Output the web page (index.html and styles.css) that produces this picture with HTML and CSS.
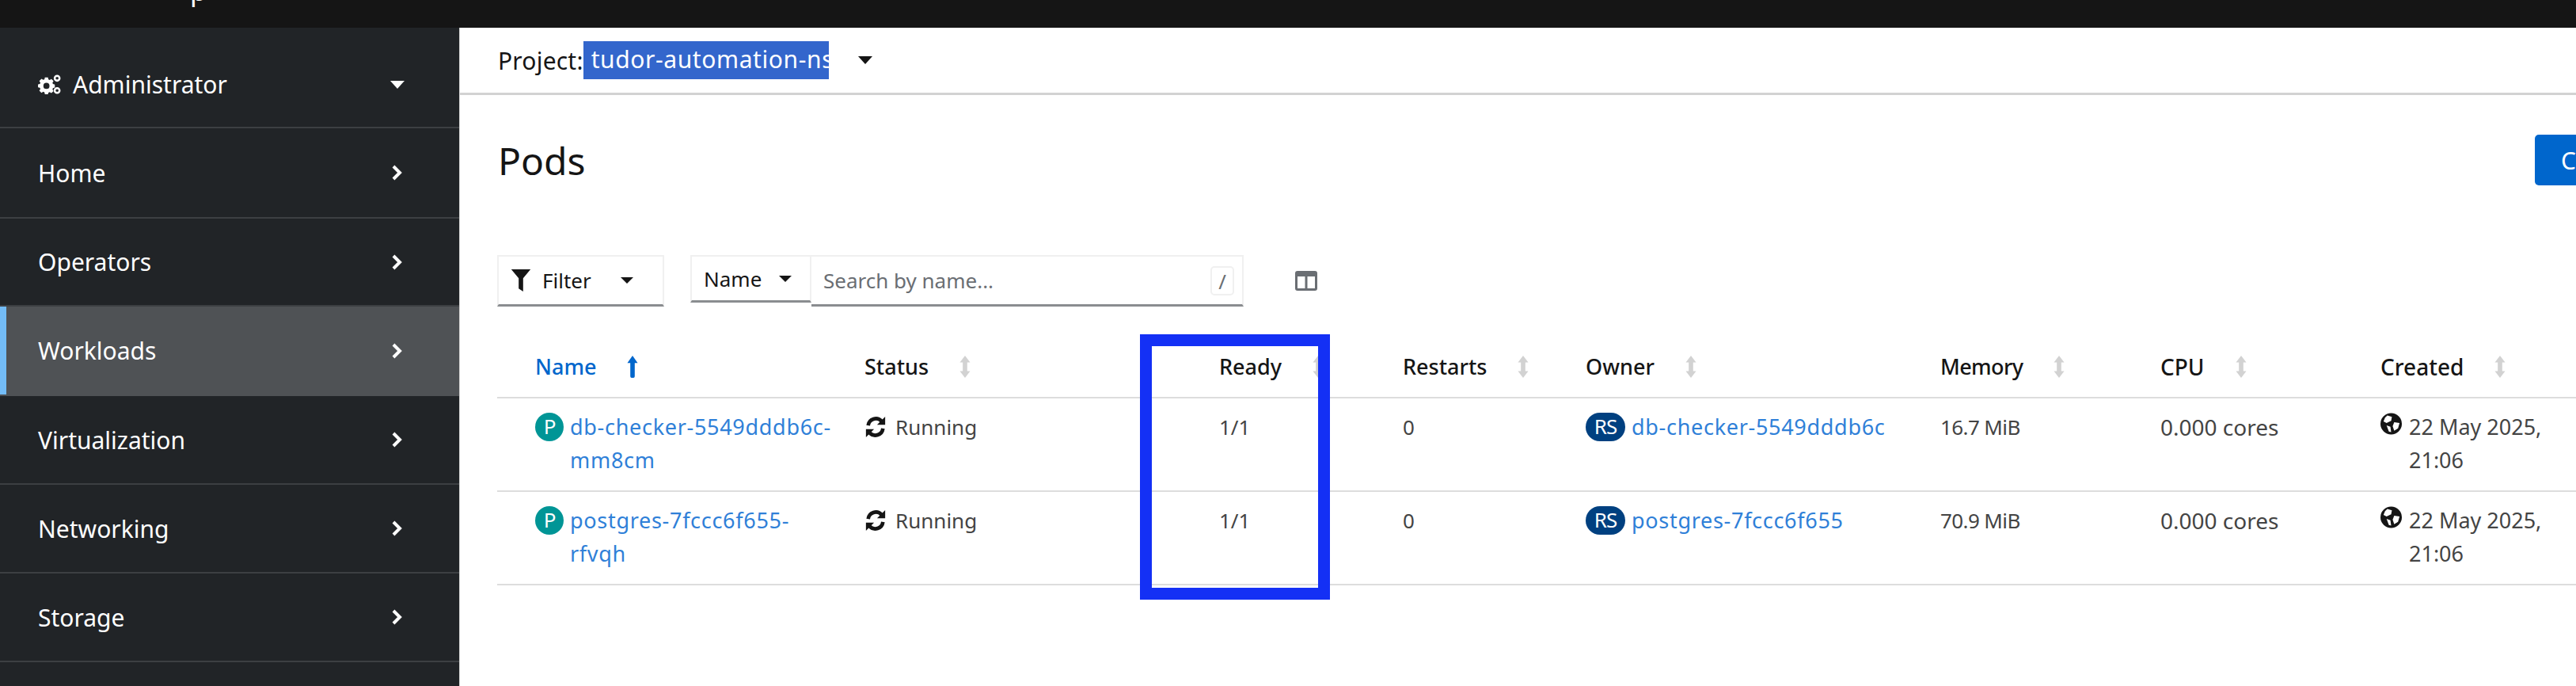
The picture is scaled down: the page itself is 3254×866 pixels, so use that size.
FILE: index.html

```html
<!DOCTYPE html>
<html lang="en">
<head>
  <meta charset="UTF-8">
  <title>Pods</title>
  <link rel="stylesheet" href="styles.css">
</head>
<body>

<header class="masthead"><span class="brand-tail">p</span></header>

<div class="page">
  <nav class="sidebar">
    <div class="nav-item perspective">
      <span class="nav-label">
        <svg class="gears" viewBox="0 0 30 28"><path fill="currentColor" fill-rule="evenodd" d="M9 5h4l.6 2.6 1.6.7 2.3-1.4 2.8 2.8-1.4 2.3.7 1.6 2.4.6v4l-2.4.6-.7 1.6 1.4 2.3-2.8 2.8-2.3-1.4-1.6.7L13 27H9l-.6-2.6-1.6-.7-2.3 1.4-2.8-2.8 1.4-2.3-.7-1.6L0 18v-4l2.4-.6.7-1.6-1.4-2.3 2.8-2.8 2.3 1.4 1.6-.7zm2 7a4 4 0 1 0 0 8 4 4 0 0 0 0-8z"/><circle cx="25" cy="6" r="3.2" fill="none" stroke="currentColor" stroke-width="2.6"/><circle cx="25" cy="22" r="3.2" fill="none" stroke="currentColor" stroke-width="2.6"/></svg>
        Administrator
      </span>
      <span class="caret"></span>
    </div>
    <div class="nav-item"><span class="nav-label">Home</span><svg class="chevron" viewBox="0 0 14 22"><path d="M3 3l8 8-8 8" fill="none" stroke="currentColor" stroke-width="4"/></svg></div>
    <div class="nav-item"><span class="nav-label">Operators</span><svg class="chevron" viewBox="0 0 14 22"><path d="M3 3l8 8-8 8" fill="none" stroke="currentColor" stroke-width="4"/></svg></div>
    <div class="nav-item active"><span class="nav-label">Workloads</span><svg class="chevron" viewBox="0 0 14 22"><path d="M3 3l8 8-8 8" fill="none" stroke="currentColor" stroke-width="4"/></svg></div>
    <div class="nav-item"><span class="nav-label">Virtualization</span><svg class="chevron" viewBox="0 0 14 22"><path d="M3 3l8 8-8 8" fill="none" stroke="currentColor" stroke-width="4"/></svg></div>
    <div class="nav-item"><span class="nav-label">Networking</span><svg class="chevron" viewBox="0 0 14 22"><path d="M3 3l8 8-8 8" fill="none" stroke="currentColor" stroke-width="4"/></svg></div>
    <div class="nav-item"><span class="nav-label">Storage</span><svg class="chevron" viewBox="0 0 14 22"><path d="M3 3l8 8-8 8" fill="none" stroke="currentColor" stroke-width="4"/></svg></div>
  </nav>

  <main class="content">
    <div class="project-bar">
      <span class="project-label">Project:</span><span class="selected">tudor-automation-ns</span>
      <span class="caret dark"></span>
    </div>

    <div class="title-row">
      <h1>Pods</h1>
      <button class="create">Create Pod</button>
    </div>

    <div class="toolbar">
      <div class="select filter">
        <svg class="funnel" viewBox="0 0 28 32"><path fill="currentColor" d="M1 1h26L17 13v18l-6-4V13z"/></svg>
        <span>Filter</span><span class="caret dark small"></span>
      </div>
      <div class="search-group">
        <div class="select name"><span>Name</span><span class="caret dark small"></span></div>
        <div class="search"><span class="placeholder">Search by name...</span><span class="slash">/</span></div>
      </div>
      <svg class="columns" viewBox="0 0 28 25"><path fill="#6a6e73" fill-rule="evenodd" d="M3 0h22a3 3 0 0 1 3 3v19a3 3 0 0 1-3 3H3a3 3 0 0 1-3-3V3a3 3 0 0 1 3-3zm0 7v15h9.500V7zm12.500 0v15H25V7z"/></svg>
    </div>

    <div class="pods">
      <div class="row head">
        <div class="cell col-name sorted">Name <svg class="sort" viewBox="0 0 14 30"><path fill="currentColor" d="M7 0l7 10H10v18a3 2 0 0 1-6 0V10H0z"/></svg></div>
        <div class="cell col-status">Status <svg class="sort" viewBox="0 0 14 30"><path fill="currentColor" d="M7 0l7 9h-4v12h4l-7 9-7-9h4V9H0z"/></svg></div>
        <div class="cell col-ready">Ready <svg class="sort" viewBox="0 0 14 30"><path fill="currentColor" d="M7 0l7 9h-4v12h4l-7 9-7-9h4V9H0z"/></svg></div>
        <div class="cell col-restarts">Restarts <svg class="sort" viewBox="0 0 14 30"><path fill="currentColor" d="M7 0l7 9h-4v12h4l-7 9-7-9h4V9H0z"/></svg></div>
        <div class="cell col-owner">Owner <svg class="sort" viewBox="0 0 14 30"><path fill="currentColor" d="M7 0l7 9h-4v12h4l-7 9-7-9h4V9H0z"/></svg></div>
        <div class="cell col-memory">Memory <svg class="sort" viewBox="0 0 14 30"><path fill="currentColor" d="M7 0l7 9h-4v12h4l-7 9-7-9h4V9H0z"/></svg></div>
        <div class="cell col-cpu">CPU <svg class="sort" viewBox="0 0 14 30"><path fill="currentColor" d="M7 0l7 9h-4v12h4l-7 9-7-9h4V9H0z"/></svg></div>
        <div class="cell col-created">Created <svg class="sort" viewBox="0 0 14 30"><path fill="currentColor" d="M7 0l7 9h-4v12h4l-7 9-7-9h4V9H0z"/></svg></div>
      </div>

      <div class="row">
        <div class="cell col-name"><span class="badge pod">P</span><a>db-checker-5549dddb6c-mm8cm</a></div>
        <div class="cell col-status"><svg class="sync" viewBox="0 0 28 30"><path fill="none" stroke="currentColor" stroke-width="5" d="M4 13a10.500 10.500 0 0 1 18-6M24 17a10.500 10.500 0 0 1-18 6"/><path fill="currentColor" d="M27 1v11H16zM1 29V18h11z"/></svg><span>Running</span></div>
        <div class="cell col-ready">1/1</div>
        <div class="cell col-restarts">0</div>
        <div class="cell col-owner"><span class="badge rs">RS</span><a>db-checker-5549dddb6c</a></div>
        <div class="cell col-memory">16.7 MiB</div>
        <div class="cell col-cpu">0.000 cores</div>
        <div class="cell col-created"><svg class="globe" viewBox="0 0 28 28"><circle cx="14" cy="14" r="14" fill="#151515"/><path fill="#fff" d="M9 3l6 2-1 5-6 3-4-2 2-5zM18 12l7 1-2 7-5 3-2-6zM8 16l5 2 1 7-3-1z"/></svg><span class="stamp">22 May 2025, 21:06</span></div>
      </div>

      <div class="row">
        <div class="cell col-name"><span class="badge pod">P</span><a>postgres-7fccc6f655-rfvqh</a></div>
        <div class="cell col-status"><svg class="sync" viewBox="0 0 28 30"><path fill="none" stroke="currentColor" stroke-width="5" d="M4 13a10.500 10.500 0 0 1 18-6M24 17a10.500 10.500 0 0 1-18 6"/><path fill="currentColor" d="M27 1v11H16zM1 29V18h11z"/></svg><span>Running</span></div>
        <div class="cell col-ready">1/1</div>
        <div class="cell col-restarts">0</div>
        <div class="cell col-owner"><span class="badge rs">RS</span><a>postgres-7fccc6f655</a></div>
        <div class="cell col-memory">70.9 MiB</div>
        <div class="cell col-cpu">0.000 cores</div>
        <div class="cell col-created"><svg class="globe" viewBox="0 0 28 28"><circle cx="14" cy="14" r="14" fill="#151515"/><path fill="#fff" d="M9 3l6 2-1 5-6 3-4-2 2-5zM18 12l7 1-2 7-5 3-2-6zM8 16l5 2 1 7-3-1z"/></svg><span class="stamp">22 May 2025, 21:06</span></div>
      </div>
    </div>
  </main>
</div>

<div class="callout"></div>

</body>
</html>
```

FILE: styles.css

```css
html, body { margin: 0; height: 100%; overflow: hidden; }
body { font-family: "Noto Sans", Arial, sans-serif; font-size: 26px; color: #151515; background: #fff; display: flex; flex-direction: column; }
svg { flex: none; display: block; }

.masthead { height: 35px; flex: none; background: #151515; color: #fff; overflow: hidden; position: relative; }
.brand-tail { position: absolute; left: 240px; top: -32px; font-size: 34px; line-height: 40px; }

.page { flex: 1; display: flex; min-height: 0; }

.sidebar { width: 580px; flex: none; background: #212427; color: #fff; display: grid; grid-template-rows: 127px 114px 111px 113px 112px 112px 112px; align-content: start; }
.nav-item { border-bottom: 2px solid #3c3f42; display: flex; align-items: center; justify-content: space-between; padding: 0 72px 0 48px; font-size: 30px; }
.nav-item.perspective { padding-top: 18px; }
.nav-item.active { background: #4f5255; border-bottom-color: #4f5255; box-shadow: inset 8px 0 0 #73bcf7; }
.nav-label { display: flex; align-items: center; gap: 15px; }
.gears { width: 29px; height: 27px; }
.chevron { width: 14px; height: 22px; }
.caret { width: 0; height: 0; border-left: 9px solid transparent; border-right: 9px solid transparent; border-top: 10px solid #fff; }
.perspective .caret { margin-right: -3px; }
.caret.dark { border-top-color: #151515; }
.caret.small { border-left-width: 8px; border-right-width: 8px; border-top-width: 8px; }

.content { flex: 1; min-width: 0; border-left: 1px solid #d2d2d2; }

.project-bar { height: 82px; border-bottom: 3px solid #d2d2d2; display: flex; align-items: center; padding-left: 48px; font-size: 30px; }
.project-label { letter-spacing: .2px; }
.selected { background: #3366cc; color: #fff; padding: 0 0 0 10px; height: 48px; line-height: 46px; width: 300px; letter-spacing: .6px; white-space: nowrap; }
.project-bar .caret { margin-left: 37px; }

.title-row { height: 106px; padding: 29px 0 0 48px; display: flex; justify-content: space-between; align-items: center; overflow: hidden; }
h1 { margin: 0; font-size: 48px; font-weight: 400; }
.create { width: 200px; height: 64px; margin-right: -148px; background: #0066cc; color: #fff; border: 0; border-radius: 5px; font: inherit; font-size: 30px; text-align: left; padding: 0 0 0 33px; flex: none; }

.toolbar { margin-top: 67px; padding-left: 47px; display: flex; align-items: center; }
.select { height: 60px; border: 2px solid #f0f0f0; border-bottom: 3px solid #8a8d90; display: flex; align-items: center; color: #151515; }
.filter { width: 207px; gap: 13px; }
.funnel { width: 28px; height: 30px; margin-left: 14px; }
.filter .caret { margin-left: 24px; }
.search-group { display: flex; margin-left: 33px; }
.name { width: 153px; gap: 22px; padding-left: 15px; box-sizing: border-box; }
.search { width: 519px; height: 60px; border-top: 2px solid #f0f0f0; border-right: 2px solid #f0f0f0; border-bottom: 3px solid #8a8d90; display: flex; align-items: center; justify-content: space-between; padding: 0 10px 0 15px; }
.placeholder { color: #6a6e73; }
.slash { color: #6a6e73; border: 2px solid #f0f0f0; border-radius: 5px; width: 30px; height: 37px; line-height: 35px; text-align: center; box-sizing: border-box; }
.columns { width: 28px; height: 25px; margin-left: 65px; }

.pods { margin: 30px 0 0 47px; }
.row { display: grid; grid-template-columns: 416px 448px 232px 231px 448px 278px 278px 1fr; height: 116px; border-bottom: 2px solid #dddddd; }
.row.head { height: 84px; }
.cell { padding: 15px 0 0 48px; line-height: 42px; display: flex; align-items: flex-start; color: #444; min-width: 0; box-sizing: border-box; }
.head .cell { padding-top: 8px; align-items: center; font-size: 27px; font-weight: 500; color: #151515; }
.head .sort { margin-left: 39px; width: 14px; height: 28px; color: #d2d2d2; }
.head .sorted { color: #0066cc; }
.head .sorted .sort { color: #0066cc; }
a { color: #2f80d8; font-size: 27px; letter-spacing: .7px; }
.col-name a { width: 336px; flex: none; }
.col-memory { letter-spacing: -.6px; }
.head .col-cpu, .head .col-created, .col-cpu { font-size: 28px; }
.stamp { font-size: 27px; }

.badge { flex: none; height: 36px; border-radius: 18px; color: #fff; text-align: center; line-height: 35px; margin: 3px 8px 0 0; letter-spacing: -1px; }
.badge.pod { width: 36px; background: #009596; }
.badge.rs { width: 50px; background: #004080; }
.sync { width: 28px; height: 28px; margin: 7px 11px 0 0; color: #151515; }
.globe { width: 27px; height: 28px; margin: 3px 9px 0 0; }

.callout { position: absolute; left: 1440px; top: 422px; width: 240px; height: 335px; box-sizing: border-box; border: 15px solid #1430f5; }
```
